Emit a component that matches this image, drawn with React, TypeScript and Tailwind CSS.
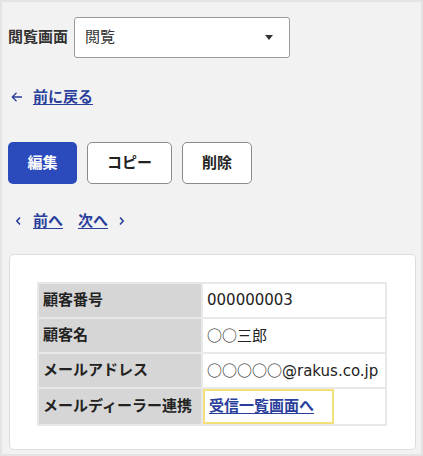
import React from "react";

const font = { fontFamily: '"DejaVu Sans", "Noto Sans CJK JP", sans-serif' };
const cjk = { fontFamily: '"Noto Sans CJK JP", sans-serif' };

const rows: { label: string; value: React.ReactNode; link?: boolean }[] = [
  { label: "顧客番号", value: "000000003" },
  { label: "顧客名", value: <span style={cjk}>○○三郎</span> },
  {
    label: "メールアドレス",
    value: (
      <>
        <span style={cjk}>○○○○○</span>@rakus.co.jp
      </>
    ),
  },
  { label: "メールディーラー連携", value: "受信一覧画面へ", link: true },
];

export default function App() {
  return (
    <div
      style={font}
      className="h-[456px] w-[423px] overflow-hidden border-2 border-[#e4e4e4] bg-[#f2f2f2] px-[6px] pt-[15px] text-[15px] text-[#222]"
    >
      <div className="flex items-center">
        <span className="font-bold text-[#333]">閲覧画面</span>
        <div className="ml-[6px] flex h-[41px] w-[216px] items-center justify-between rounded-[3px] border border-[#9a9a9a] bg-white pl-[10px] pr-[16px]">
          <span className="text-[#333]">閲覧</span>
          <span className="h-0 w-0 border-x-[4px] border-t-[5px] border-x-transparent border-t-[#333]" />
        </div>
      </div>

      <div className="mt-[29px] flex h-[20px] items-center pl-[3px]">
        <svg width="12" height="12" viewBox="0 0 12 12" className="text-[#2a3f9b]">
          <path d="M11 6H1.5M5.5 1.8L1.3 6 5.5 10.2" fill="none" stroke="currentColor" strokeWidth="1.3" />
        </svg>
        <a href="#" className="ml-[10px] font-bold text-[#2a3f9b] underline underline-offset-2">前に戻る</a>
      </div>

      <div className="mt-[35px] flex gap-[10px]">
        <button className="h-[42px] w-[69px] rounded-[5px] bg-[#2b4bbd] font-bold text-white">編集</button>
        <button className="h-[42px] w-[85px] rounded-[5px] border border-[#8a8a8a] bg-white font-bold">コピー</button>
        <button className="h-[42px] w-[70px] rounded-[5px] border border-[#8a8a8a] bg-white font-bold">削除</button>
      </div>

      <div className="mt-[27px] flex h-[20px] items-center pl-[7px] font-bold text-[#2a3f9b]">
        <svg width="7" height="10" viewBox="0 0 7 10">
          <path d="M5 1.5L1.8 5 5 8.5" fill="none" stroke="currentColor" strokeWidth="1.6" />
        </svg>
        <a href="#" className="ml-[11px] underline underline-offset-2">前へ</a>
        <a href="#" className="ml-[15px] underline underline-offset-2">次へ</a>
        <svg width="7" height="10" viewBox="0 0 7 10" className="ml-[10px]">
          <path d="M2 1.5L5.2 5 2 8.5" fill="none" stroke="currentColor" strokeWidth="1.6" />
        </svg>
      </div>

      <div className="ml-px mt-[23px] h-[196px] w-[407px] rounded-[5px] border border-[#dcdcdc] bg-white px-[27px] pt-[27px]">
        <table className="w-[350px] border-collapse">
          <tbody>
            {rows.map((r) => (
              <tr key={r.label} className="h-[35px]">
                <td className="w-[164px] border-2 border-[#e8e8e8] bg-[#d6d6d6] pl-[4px] font-bold whitespace-nowrap text-[#222]">
                  {r.label}
                </td>
                <td className={`border-2 border-[#e8e8e8] ${r.link ? "p-0" : "pl-[4px]"} whitespace-nowrap`}>
                  {r.link ? (
                    <div className="flex h-[35px] w-[131px] items-center border-2 border-[#f4e07a] pl-[4px]">
                      <a href="#" className="font-bold text-[#2a3f9b] underline underline-offset-2">{r.value}</a>
                    </div>
                  ) : (
                    r.value
                  )}
                </td>
              </tr>
            ))}
          </tbody>
        </table>
      </div>
    </div>
  );
}
